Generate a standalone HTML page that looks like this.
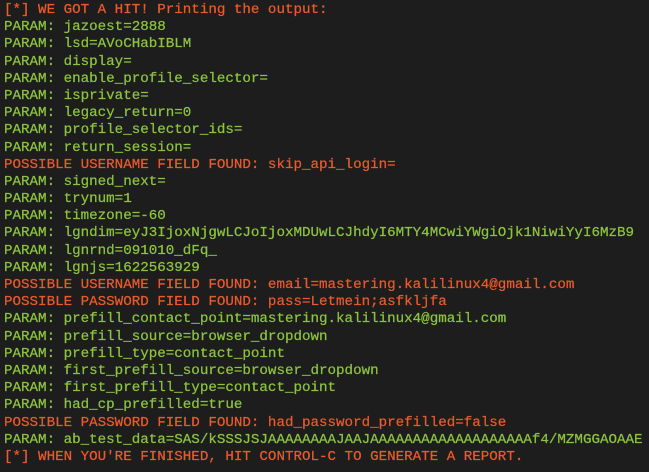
<!DOCTYPE html>
<html><head><meta charset="utf-8"><style>
html,body{margin:0;padding:0;background:#1d1d1d;width:649px;height:472px;overflow:hidden}
pre{margin:0;padding:2px 0 0 4px;font-family:"Liberation Mono",monospace;font-size:14.2px;line-height:17.18px;color:#8cc43e;white-space:pre;-webkit-text-stroke:0.25px currentColor}
.o{color:#ea5a2a}
</style></head><body><pre><span class="o">[*] WE GOT A HIT! Printing the output:</span>
PARAM: jazoest=2888
PARAM: lsd=AVoCHabIBLM
PARAM: display=
PARAM: enable_profile_selector=
PARAM: isprivate=
PARAM: legacy_return=0
PARAM: profile_selector_ids=
PARAM: return_session=
<span class="o">POSSIBLE USERNAME FIELD FOUND: skip_api_login=</span>
PARAM: signed_next=
PARAM: trynum=1
PARAM: timezone=-60
PARAM: lgndim=eyJ3IjoxNjgwLCJoIjoxMDUwLCJhdyI6MTY4MCwiYWgiOjk1NiwiYyI6MzB9
PARAM: lgnrnd=091010_dFq_
PARAM: lgnjs=1622563929
<span class="o">POSSIBLE USERNAME FIELD FOUND: email=mastering.kalilinux4@gmail.com</span>
<span class="o">POSSIBLE PASSWORD FIELD FOUND: pass=Letmein;asfkljfa</span>
PARAM: prefill_contact_point=mastering.kalilinux4@gmail.com
PARAM: prefill_source=browser_dropdown
PARAM: prefill_type=contact_point
PARAM: first_prefill_source=browser_dropdown
PARAM: first_prefill_type=contact_point
PARAM: had_cp_prefilled=true
<span class="o">POSSIBLE PASSWORD FIELD FOUND: had_password_prefilled=false</span>
PARAM: ab_test_data=SAS/kSSSJSJAAAAAAAAJAAJAAAAAAAAAAAAAAAAAAAf4/MZMGGAOAAE
<span class="o">[*] WHEN YOU'RE FINISHED, HIT CONTROL-C TO GENERATE A REPORT.</span></pre></body></html>
